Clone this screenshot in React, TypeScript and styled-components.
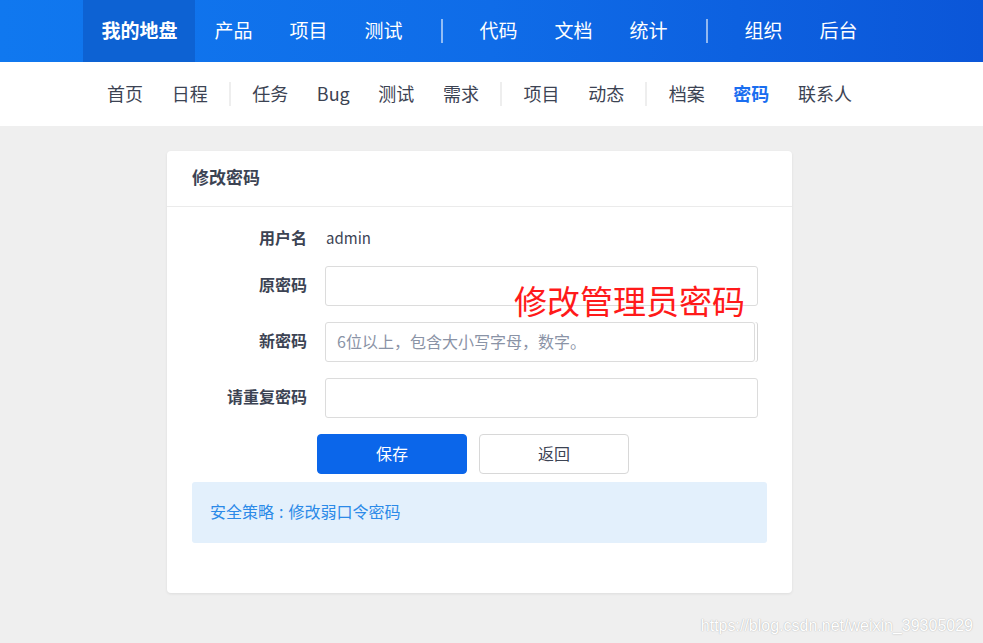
import styled, { createGlobalStyle } from 'styled-components';

const GlobalStyle = createGlobalStyle`
  html, body {
    margin: 0;
    padding: 0;
    background: #efefef;
  }
  body {
    font-family: "Noto Sans CJK SC", "Liberation Sans", sans-serif;
    color: #3c4353;
  }
  * {
    box-sizing: border-box;
  }
`;

const MAIN_NAV = [
  ['我的地盘', '产品', '项目', '测试'],
  ['代码', '文档', '统计'],
  ['组织', '后台'],
];

const SUB_NAV = [
  ['首页', '日程'],
  ['任务', 'Bug', '测试', '需求'],
  ['项目', '动态'],
  ['档案', '密码', '联系人'],
];

const App = () => {
  return (
    <Page>
      <GlobalStyle />
      <TopBar>
        <Center>
          {MAIN_NAV.map((group, gi) => (
            <Group key={gi}>
              {gi > 0 && <TopDivider />}
              {group.map((item) => (
                <TopItem key={item} $active={item === '我的地盘'}>
                  {item}
                </TopItem>
              ))}
            </Group>
          ))}
        </Center>
      </TopBar>
      <SubBar>
        <Center>
          {SUB_NAV.map((group, gi) => (
            <Group key={gi}>
              {gi > 0 && <SubDivider />}
              {group.map((item) => (
                <SubItem key={item} $active={item === '密码'}>
                  {item}
                </SubItem>
              ))}
            </Group>
          ))}
        </Center>
      </SubBar>
      <Content>
        <Card>
          <CardHeader>修改密码</CardHeader>
          <CardBody>
            <Form>
              <Label $short>用户名</Label>
              <Value>admin</Value>
              <Label>原密码</Label>
              <InputWrap>
                <Input type="password" />
                <Annotation>修改管理员密码</Annotation>
              </InputWrap>
              <Label>新密码</Label>
              <Input type="password" placeholder="6位以上，包含大小写字母，数字。" $edge />
              <Label>请重复密码</Label>
              <Input type="password" />
            </Form>
            <Actions>
              <Button $primary>保存</Button>
              <Button>返回</Button>
            </Actions>
            <Notice>
              安全策略<Colon>:</Colon>修改弱口令密码
            </Notice>
          </CardBody>
        </Card>
      </Content>
      <Watermark>https://blog.csdn.net/weixin_39305029</Watermark>
    </Page>
  );
};

export default App;

const Page = styled.div`
  position: relative;
  width: 983px;
  height: 643px;
  overflow: hidden;
  background: #efefef;
`;

const Center = styled.div`
  width: 959px;
  height: 100%;
  display: flex;
  justify-content: center;
  align-items: center;
`;

const Group = styled.div`
  display: flex;
  align-items: center;
  height: 100%;
`;

const TopBar = styled.div`
  height: 62px;
  background: linear-gradient(90deg, #1078ef 0%, #0f6ce8 50%, #0b56d8 100%);
`;

const TopItem = styled.div<{ $active?: boolean }>`
  height: 100%;
  display: flex;
  align-items: center;
  padding: 0 18px 3px;
  margin: 0 0.5px;
  font-size: 19px;
  line-height: 1;
  color: #fff;
  font-weight: ${(p) => (p.$active ? 700 : 400)};
  background: ${(p) => (p.$active ? '#0d62d3' : 'transparent')};
`;

const TopDivider = styled.div`
  width: 2px;
  height: 24px;
  margin: 0 18px 1px 20px;
  background: rgba(255, 255, 255, 0.55);
`;

const SubBar = styled.div`
  height: 64px;
  background: #fff;
`;

const SubItem = styled.div<{ $active?: boolean }>`
  padding: 0 14.3px 3px;
  font-size: 18px;
  line-height: 1;
  color: ${(p) => (p.$active ? '#1a6ef0' : '#3c4353')};
  font-weight: ${(p) => (p.$active ? 700 : 400)};
`;

const SubDivider = styled.div`
  width: 2px;
  height: 24px;
  margin: 0 7px;
  background: #eeeeee;
`;

const Content = styled.div`
  width: 959px;
  display: flex;
  justify-content: center;
  padding-top: 25px;
`;

const Card = styled.div`
  width: 625px;
  height: 442px;
  background: #fff;
  border-radius: 4px;
  box-shadow: 0 1px 3px rgba(0, 0, 0, 0.08);
`;

const CardHeader = styled.div`
  height: 56px;
  display: flex;
  align-items: center;
  padding: 0 25px 4px;
  border-bottom: 1px solid #ebebeb;
  font-size: 17px;
  font-weight: 700;
  color: #3c4353;
`;

const CardBody = styled.div`
  padding: 18px 25px 0;
`;

const Form = styled.div`
  display: grid;
  grid-template-columns: 115px 433px;
  column-gap: 18px;
  row-gap: 16px;
  align-items: center;
`;

const Label = styled.div<{ $short?: boolean }>`
  text-align: right;
  font-size: 16px;
  font-weight: 600;
  color: #3c4353;
  line-height: 1;
  padding-bottom: ${(p) => (p.$short ? '2px' : '4px')};
`;

const Value = styled.div`
  height: 25px;
  display: flex;
  align-items: center;
  padding: 0 0 1px 1px;
  font-size: 15px;
  color: #3c4353;
`;

const InputWrap = styled.div`
  position: relative;
`;

const Input = styled.input<{ $edge?: boolean }>`
  display: block;
  width: ${(p) => (p.$edge ? '430px' : '433px')};
  height: 40px;
  padding: 0 11px 2px;
  border: 1px solid #dcdcdc;
  border-radius: 3px;
  background: #fff;
  font-family: inherit;
  font-size: 16px;
  color: #3c4353;
  outline: none;
  box-shadow: ${(p) => (p.$edge ? '2px 0 0 #fff, 3px 0 0 #d6d6d6' : 'none')};
  &::placeholder {
    color: #8a93a6;
  }
`;

const Annotation = styled.div`
  position: absolute;
  left: 189px;
  top: 14px;
  font-size: 33px;
  line-height: 40px;
  color: #ff1a1a;
  white-space: nowrap;
  pointer-events: none;
`;

const Actions = styled.div`
  display: flex;
  gap: 12px;
  padding-left: 125px;
  margin-top: 16px;
`;

const Button = styled.button<{ $primary?: boolean }>`
  width: 150px;
  height: 40px;
  padding: 0 0 3px;
  border-radius: 4px;
  font-family: inherit;
  font-size: 16px;
  cursor: pointer;
  border: 1px solid ${(p) => (p.$primary ? '#0b66ea' : '#d8d8d8')};
  background: ${(p) => (p.$primary ? '#0b66ea' : '#fff')};
  color: ${(p) => (p.$primary ? '#fff' : '#3c4353')};
`;

const Notice = styled.div`
  margin-top: 8px;
  height: 61px;
  display: flex;
  align-items: center;
  padding: 0 18px 3px;
  border-radius: 3px;
  background: #e3f0fc;
  color: #2b8ae8;
  font-size: 16px;
`;

const Colon = styled.span`
  padding: 0 5px;
`;

const Watermark = styled.div`
  position: absolute;
  right: 10px;
  bottom: 8px;
  font-family: "Liberation Sans", Arial, sans-serif;
  font-size: 16px;
  color: #fff;
  text-shadow: 0 0 1px rgba(0, 0, 0, 0.25), 0 0 2px rgba(0, 0, 0, 0.1);
`;
